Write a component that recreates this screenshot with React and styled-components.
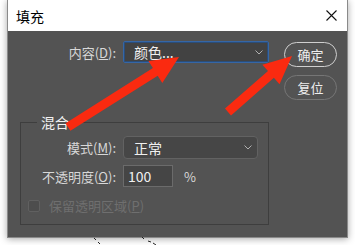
import React from 'react';
import styled, { createGlobalStyle } from 'styled-components';

const Global = createGlobalStyle`
  html, body { margin: 0; padding: 0; background: #ffffff; }
  body {
    width: 355px; height: 245px; overflow: hidden;
    font-family: "Noto Sans CJK SC", "Noto Sans", sans-serif;
  }
`;

const Stage = styled.div`
  position: relative;
  width: 355px;
  height: 245px;
  padding-left: 7px;
  box-sizing: border-box;
`;

const Dialog = styled.div`
  width: 341px;
  box-sizing: border-box;
  border: 1px solid #8a8a8a;
  border-top: none;
  box-shadow: 0 1px 7px rgba(0, 0, 0, 0.35);
  display: flex;
  flex-direction: column;
`;

const TitleBar = styled.div`
  height: 31px;
  background: #ffffff;
  display: flex;
  align-items: center;
  justify-content: space-between;
  padding: 0 10px 0 8px;
  font-size: 14px;
  color: #000;
`;

const Close = styled.svg`
  width: 11px;
  height: 11px;
  display: block;
`;

const Body = styled.div`
  height: 206px;
  background: #535353;
  display: flex;
  align-items: flex-start;
  padding: 10px 0 0 0;
  box-sizing: border-box;
`;

const Main = styled.div`
  width: 261px;
  display: flex;
  flex-direction: column;
`;

const FormRow = styled.div`
  display: grid;
  grid-template-columns: ${p => p.$label}px auto;
  column-gap: 7px;
  align-items: center;
  height: ${p => p.$h}px;
`;

const Label = styled.label`
  text-align: right;
  font-size: 13px;
  color: #d8d8d8;
  white-space: nowrap;
  line-height: 1;
  u { text-decoration: underline; text-underline-offset: 1px; }
`;

const SelectBox = styled.div`
  width: ${p => p.$w}px;
  height: ${p => p.$h}px;
  box-sizing: border-box;
  display: flex;
  align-items: center;
  justify-content: space-between;
  padding: 0 5px 0 10px;
  background: ${p => (p.$focus ? '#424242' : '#464646')};
  border: 1px solid ${p => (p.$focus ? '#3566a6' : '#626262')};
  box-shadow: ${p => (p.$focus ? 'inset 0 0 0 1px #2b4d78' : 'none')};
  border-radius: ${p => (p.$focus ? 2 : 4)}px;
  font-size: 14px;
  color: #f0f0f0;
`;

const Chevron = styled.svg`
  width: 8px;
  height: 5px;
  display: block;
`;

const Buttons = styled.div`
  margin-left: 15px;
  margin-top: 1px;
  display: flex;
  flex-direction: column;
  gap: 8px;
`;

const PillButton = styled.button`
  width: 53px;
  height: 25px;
  box-sizing: border-box;
  border-radius: 13px;
  background: #535353;
  border: ${p => (p.$primary ? '1.5px solid #cfcfcf' : '1px solid #767676')};
  color: #eeeeee;
  font-family: inherit;
  font-size: 13px;
  padding: 0;
  display: flex;
  align-items: center;
  justify-content: center;
`;

const Group = styled.fieldset`
  margin: 51px 0 0 12px;
  width: 249px;
  box-sizing: border-box;
  border: 1px solid #3e3e3e;
  padding: 6px 0 12px 0;
  display: flex;
  flex-direction: column;
  min-width: 0;
`;

const Legend = styled.legend`
  margin-left: 16px;
  padding: 0 4px;
  font-size: 14px;
  line-height: 16px;
  color: #f2f2f2;
`;

const Rows = styled.div`
  display: flex;
  flex-direction: column;
  gap: 6px;
`;

const NumberBox = styled.div`
  width: 50px;
  height: 22px;
  box-sizing: border-box;
  background: #454545;
  border: 1px solid #6b6b6b;
  font-size: 14px;
  color: #f0f0f0;
  padding-left: 4px;
  display: flex;
  align-items: center;
`;

const Inline = styled.div`
  display: flex;
  align-items: center;
  gap: 11px;
`;

const Unit = styled.span`
  font-size: 13px;
  color: #d8d8d8;
`;

const CheckRow = styled.div`
  margin-top: 12px;
  padding-left: 7px;
  display: flex;
  align-items: center;
  gap: 9px;
  font-size: 13px;
  color: #6f6f6f;
  line-height: 1;
  u { text-decoration: underline; }
`;

const Check = styled.span`
  width: 12px;
  height: 12px;
  box-sizing: border-box;
  border: 1px solid #606060;
  background: #4d4d4d;
  border-radius: 2px;
`;

const Overlay = styled.svg`
  position: absolute;
  left: 0;
  top: 0;
  width: 355px;
  height: 245px;
  pointer-events: none;
`;

function arrowPoints(x1, y1, x2, y2, sw = 4.5, hl = 28, hw = 13) {
  const dx = x2 - x1;
  const dy = y2 - y1;
  const L = Math.hypot(dx, dy);
  const ux = dx / L;
  const uy = dy / L;
  const nx = -uy;
  const ny = ux;
  const bx = x2 - ux * hl;
  const by = y2 - uy * hl;
  const p = [
    [x1 + nx * sw, y1 + ny * sw],
    [bx + nx * sw, by + ny * sw],
    [bx + nx * hw, by + ny * hw],
    [x2, y2],
    [bx - nx * hw, by - ny * hw],
    [bx - nx * sw, by - ny * sw],
    [x1 - nx * sw, y1 - ny * sw],
  ];
  return p.map(([a, b]) => `${a.toFixed(1)},${b.toFixed(1)}`).join(' ');
}

const ChevronIcon = () => (
  <Chevron viewBox="0 0 8 5">
    <polyline points="0.5,0.5 4,4 7.5,0.5" fill="none" stroke="#b0b0b0" strokeWidth="1" />
  </Chevron>
);

export default function App() {
  return (
    <>
      <Global />
      <Stage>
        <Dialog>
          <TitleBar>
            <span>填充</span>
            <Close viewBox="0 0 11 11">
              <path d="M0.5 0.5 L10.5 10.5 M10.5 0.5 L0.5 10.5" stroke="#111" strokeWidth="1.1" />
            </Close>
          </TitleBar>
          <Body>
            <Main>
              <FormRow $label={108} $h={22}>
                <Label>内容(<u>D</u>):</Label>
                <SelectBox $w={146} $h={22} $focus>
                  <span>颜色...</span>
                  <ChevronIcon />
                </SelectBox>
              </FormRow>
              <Group>
                <Legend>混合</Legend>
                <Rows>
                  <FormRow $label={95} $h={23}>
                    <Label>模式(<u>M</u>):</Label>
                    <SelectBox $w={135} $h={23}>
                      <span>正常</span>
                      <ChevronIcon />
                    </SelectBox>
                  </FormRow>
                  <FormRow $label={95} $h={22}>
                    <Label>不透明度(<u>O</u>):</Label>
                    <Inline>
                      <NumberBox>100</NumberBox>
                      <Unit>%</Unit>
                    </Inline>
                  </FormRow>
                </Rows>
                <CheckRow>
                  <Check />
                  <span>保留透明区域(<u>P</u>)</span>
                </CheckRow>
              </Group>
            </Main>
            <Buttons>
              <PillButton $primary>确定</PillButton>
              <PillButton>复位</PillButton>
            </Buttons>
          </Body>
        </Dialog>
        <Overlay viewBox="0 0 355 245">
          <polygon points={arrowPoints(68, 127, 179, 57)} fill="#fa2a10" />
          <polygon points={arrowPoints(228, 112, 292, 56)} fill="#fa2a10" />
          <g stroke="#222" strokeWidth="1">
            <line x1="94" y1="238" x2="96" y2="240" />
            <line x1="98" y1="242" x2="100" y2="244" />
            <line x1="142" y1="237" x2="144" y2="239" />
            <line x1="148" y1="241" x2="151" y2="242" />
            <line x1="153" y1="243" x2="156" y2="245" />
          </g>
        </Overlay>
      </Stage>
    </>
  );
}
